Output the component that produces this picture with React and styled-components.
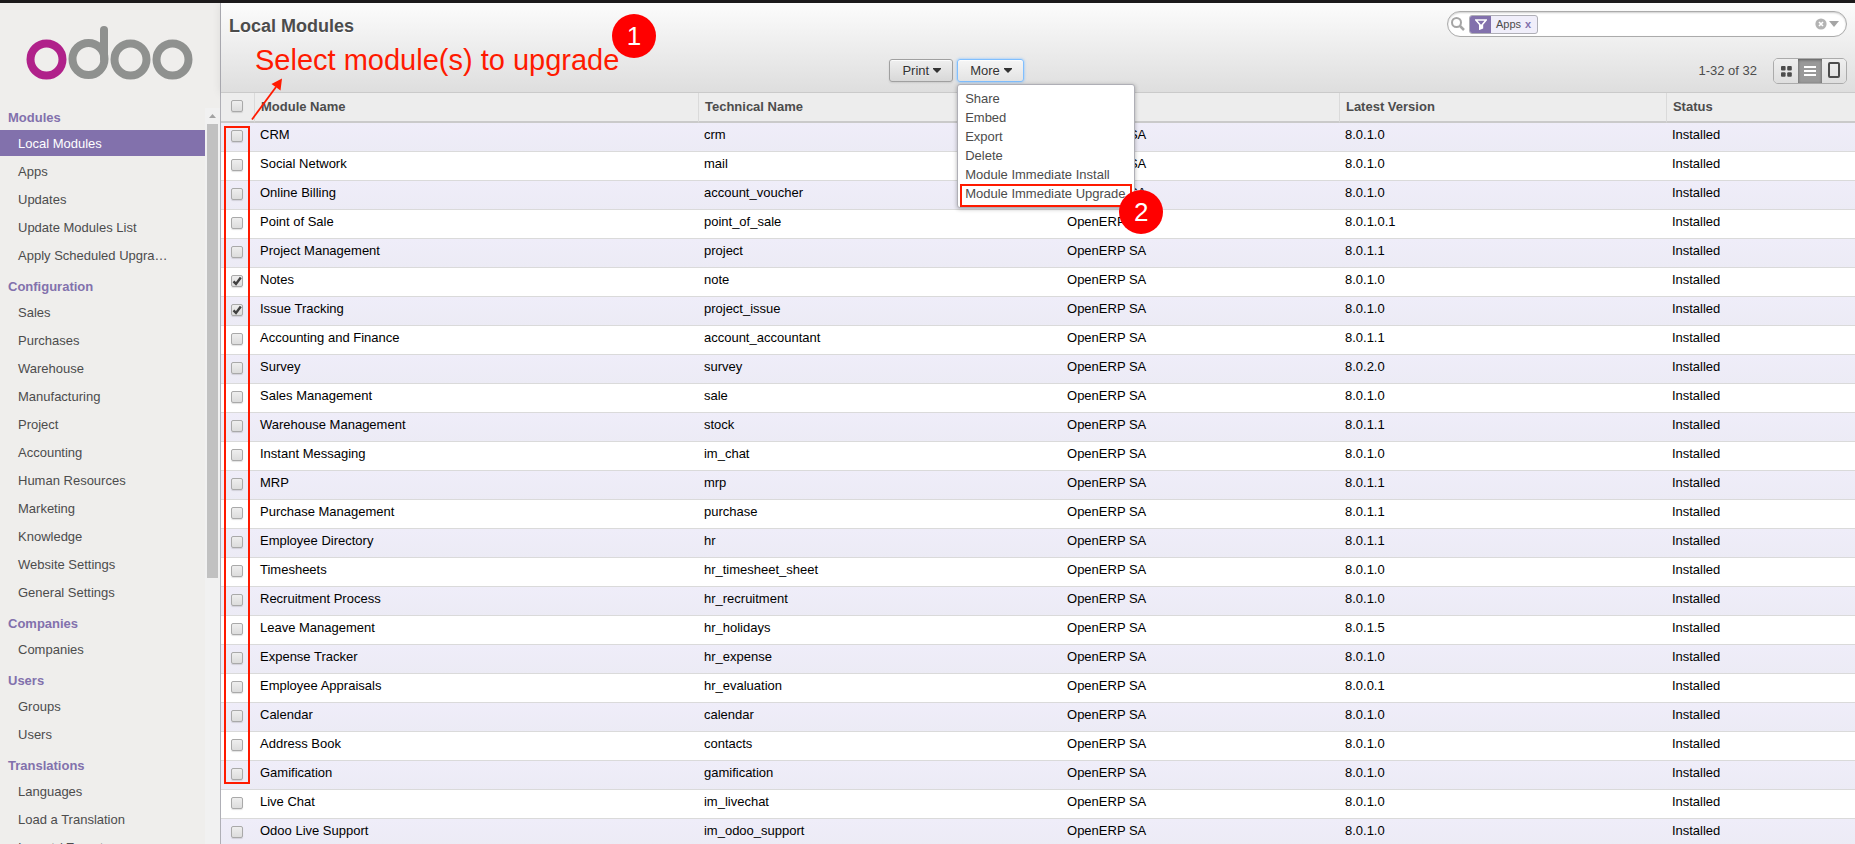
import React from "react";
import styled, { createGlobalStyle, css } from "styled-components";

const GlobalStyle = createGlobalStyle`
  * { box-sizing: border-box; }
  body {
    margin: 0;
    overflow: hidden;
    background: #fff;
    color: #4c4c4c;
    font-family: "Liberation Sans", Arial, sans-serif;
    font-size: 13px;
    line-height: 18px;
  }
  button, input { font: inherit; color: inherit; }
`;

const PURPLE = "#8271ac";
const RED = "#ff1a00";

const Shell = styled.div`
  display: flex;
  height: 100vh;
  overflow: hidden;
  border-top: 3px solid #1c1a1b;
`;

/* ---------- sidebar ---------- */

const Sidebar = styled.aside`
  display: flex;
  flex-direction: column;
  flex: none;
  width: 221px;
  background: #efeeec;
  border-right: 1px solid #afafb6;
`;

const LogoLink = styled.a`
  display: block;
  flex: none;
  height: 105px;
  padding: 23px 0 0 26px;
`;

const SidebarBody = styled.div`
  display: flex;
  flex: 1;
  min-height: 0;
`;

const Nav = styled.nav`
  flex: 1;
  min-width: 0;
  overflow: hidden;
`;

const Group = styled.section`
  & + & { margin-top: 9px; }
`;

const GroupTitle = styled.h2`
  margin: 0;
  padding: 1px 8px 3px;
  font-size: 13px;
  line-height: 18px;
  font-weight: bold;
  color: ${PURPLE};
`;

const GroupList = styled.ul`
  margin: 0;
  padding: 0;
  list-style: none;
`;

const NavLink = styled.a`
  display: block;
  margin-bottom: 2px;
  padding: 2px 36px 0 18px;
  line-height: 24px;
  color: #4c4c4c;
  text-decoration: none;
  white-space: nowrap;
  overflow: hidden;
  text-overflow: ellipsis;
  ${(p) => p.$active && css`
    background: ${PURPLE};
    color: #fff;
  `}
`;

const ScrollTrack = styled.div`
  flex: none;
  width: 15px;
  padding: 6px 2px 0;
  background: #f1f1f1;
  svg { display: block; margin: 0 auto 6px; }
`;

const ScrollThumb = styled.div`
  width: 11px;
  height: 454px;
  background: #c1c1c1;
`;

/* ---------- header ---------- */

const Main = styled.main`
  flex: 1;
  min-width: 0;
`;

const Header = styled.header`
  position: relative;
  display: grid;
  grid-template-columns: 20fr 29fr;
  grid-template-rows: 26px 26px;
  row-gap: 21px;
  height: 90px;
  padding: 8px 8px 0;
  background: linear-gradient(#fcfcfc, #dedede);
  border-bottom: 1px solid #cacaca;
  box-shadow: 0 0 9px rgba(0, 0, 0, 0.1);
`;

const Title = styled.h1`
  margin: 0;
  font-size: 18px;
  line-height: 30px;
  font-weight: bold;
  text-shadow: 0 1px 1px #fff;
`;

const SearchBox = styled.div`
  display: flex;
  align-items: center;
  justify-self: end;
  width: 400px;
  height: 26px;
  padding: 0 7px 0 3px;
  background: #fff;
  border: 1px solid #ababab;
  border-radius: 13px;
  box-shadow: inset 0 1px 2px rgba(0, 0, 0, 0.2);
`;

const IconButton = styled.button`
  display: flex;
  flex: none;
  padding: 0;
  border: 0;
  background: none;
`;

const Facet = styled.div`
  display: flex;
  align-items: center;
  height: 19px;
  margin-left: 4px;
  border: 1px solid #afafb6;
  border-radius: 3px;
  background: #f0eefa;
  overflow: hidden;
  font-size: 11px;
`;

const FacetIcon = styled.span`
  display: flex;
  align-items: center;
  justify-content: center;
  width: 21px;
  height: 17px;
  margin-right: 5px;
  background: ${PURPLE};
`;

const FacetRemove = styled.button`
  padding: 0 6px 0 4px;
  border: 0;
  background: none;
  color: ${PURPLE};
  font-weight: bold;
  line-height: 16px;
`;

const SearchInput = styled.input`
  flex: 1;
  min-width: 0;
  margin: 0 6px;
  border: 0;
  outline: 0;
  background: none;
`;

const Toolbar = styled.div`
  grid-column: 2;
  display: flex;
  justify-content: space-between;
  align-items: center;
`;

const Actions = styled.div`
  display: flex;
  align-self: flex-start;
  gap: 4px;
  padding-top: 1px;
`;

const Dropdown = styled.div`
  position: relative;
`;

const MenuButton = styled.button`
  display: flex;
  align-items: center;
  gap: 4px;
  height: 23px;
  padding: 0 11px 0 12px;
  border: 1px solid ${(p) => (p.$open ? "#80bfff" : "#a0a0a0")};
  border-radius: 3px;
  background: linear-gradient(#efefef, #d8d8d8);
  box-shadow: ${(p) => (p.$open ? "0 0 3px #80bfff, inset 0 1px rgba(255, 255, 255, 0.8)" : "0 1px 2px rgba(0, 0, 0, 0.1), inset 0 1px rgba(255, 255, 255, 0.8)")};
  ${(p) => p.$open && css`background: linear-gradient(#f6f6f6, #e3e3e3);`}
  color: #333;
  text-shadow: 0 1px 1px rgba(255, 255, 255, 0.5);
`;

const Menu = styled.ul`
  position: absolute;
  z-index: 2;
  top: 25px;
  left: 0;
  width: 178px;
  margin: 0;
  padding: 4px 0;
  list-style: none;
  background: #fff;
  border: 1px solid #afafb6;
  border-radius: 3px;
  box-shadow: 0 1px 4px rgba(0, 0, 0, 0.3);
`;

const MenuLink = styled.a`
  display: block;
  padding: 0 7px;
  line-height: 19px;
  color: #4c4c4c;
  text-decoration: none;
  white-space: nowrap;
`;

const PagerGroup = styled.div`
  display: flex;
  align-items: center;
  gap: 16px;
`;

const ViewSwitch = styled.div`
  display: flex;
  height: 26px;
  border: 1px solid #ababab;
  border-radius: 5px;
  overflow: hidden;
`;

const ViewButton = styled.button`
  display: flex;
  align-items: center;
  justify-content: center;
  width: 24px;
  padding: 0;
  border: 0;
  background: linear-gradient(#efefef, #dedede);
  ${(p) => p.$active && css`
    background: #999;
    box-shadow: inset 0 1px 3px rgba(0, 0, 0, 0.4);
  `}
`;

/* ---------- list ---------- */

const ListArea = styled.div`
  position: relative;
`;

const ModuleTable = styled.table`
  width: 100%;
  table-layout: fixed;
  border-collapse: separate;
  border-spacing: 0;
`;

const Col = styled.col`
  width: ${(p) => p.$w};
`;

const HeadCell = styled.th`
  height: 30px;
  padding: 0 6px;
  text-align: left;
  font-weight: bold;
  background: #ededed;
  border-left: 1px solid #dadada;
  border-bottom: 2px solid #cacaca;
`;

const HeadCheckCell = styled(HeadCell)`
  padding: 7px 0 0 10px;
  border-left: 0;
  vertical-align: top;
`;

const Row = styled.tr`
  color: #000;
  &:nth-child(odd) { background: linear-gradient(#efedf9, #ecebf5); }
`;

const Cell = styled.td`
  height: 29px;
  padding: 3px 6px 0;
  vertical-align: top;
  border-bottom: 1px solid #dadada;
`;

const CheckCell = styled(Cell)`
  padding: 7px 0 0 10px;
`;

const CheckLabel = styled.label`
  position: relative;
  display: block;
  width: 12px;
  height: 12px;
  svg {
    position: absolute;
    inset: 0;
    pointer-events: none;
    visibility: hidden;
  }
  input:checked + svg { visibility: visible; }
`;

const CheckInput = styled.input`
  appearance: none;
  display: block;
  width: 12px;
  height: 12px;
  margin: 0;
  border: 1px solid #a9a9a9;
  border-radius: 2px;
  background: linear-gradient(#eee, #dcdcdc);
  box-shadow: 0 1px 1px rgba(0, 0, 0, 0.12);
`;

/* ---------- guide marks ---------- */

const StepBadge = styled.span`
  position: absolute;
  z-index: 3;
  top: ${(p) => p.$top};
  left: ${(p) => p.$left};
  width: 44px;
  height: 44px;
  border-radius: 50%;
  background: #f00;
  color: #fff;
  font-size: 26px;
  line-height: 44px;
  text-align: center;
`;

const StepText = styled.p`
  position: absolute;
  top: 39px;
  left: 34px;
  margin: 0;
  font-size: 29px;
  line-height: 36px;
  color: ${RED};
  white-space: nowrap;
`;

const StepArrow = styled.svg`
  position: absolute;
  z-index: 1;
  top: 74px;
  left: 28px;
`;

const Outline = styled.div`
  position: absolute;
  border: 2px solid ${RED};
  pointer-events: none;
`;

const ColumnOutline = styled(Outline)`
  top: 33px;
  left: 3px;
  width: 26px;
  height: 658px;
`;

const ItemOutline = styled(Outline)`
  bottom: 0;
  left: 2px;
  right: 2px;
  height: 23px;
`;

/* ---------- icons ---------- */

const Logo = () => (
  <svg width="168" height="56" viewBox="0 0 168 56" fill="none" strokeWidth="8" role="img" aria-label="odoo">
    <circle cx="20.5" cy="33.5" r="16" stroke="#b0218a" />
    <g stroke="#8f918f">
      <circle cx="62.5" cy="33" r="16" />
      <path d="M78 33V4" strokeLinecap="round" />
      <circle cx="104.5" cy="33.5" r="16" />
      <circle cx="146.5" cy="33.5" r="16" />
    </g>
  </svg>
);

const Caret = () => (
  <svg width="8" height="5" viewBox="0 0 8 5" fill="#333"><path d="M0 0h8v1L4 5 0 1z" /></svg>
);

const Magnifier = () => (
  <svg width="14" height="14" viewBox="0 0 14 14" fill="none" stroke="#a5a5a5" strokeWidth="2">
    <circle cx="5.5" cy="5.5" r="4.5" />
    <path d="M9 9l4 4" strokeWidth="2.5" />
  </svg>
);

const Funnel = () => (
  <svg width="12" height="11" viewBox="0 0 12 11" fill="none" stroke="#fff" strokeWidth="1.6">
    <path d="M.8 1h10.4L7.4 5.6V9L4.800 10V5.6z" />
    <path d="M4.8 5.6h2.6V9L4.800 10z" fill="#fff" stroke="none" />
  </svg>
);

const Clear = () => (
  <svg width="12" height="12" viewBox="0 0 12 12">
    <circle cx="6" cy="6" r="5.6" fill="#b3b3b3" />
    <path d="M4 4l4 4M8 4l-4 4" stroke="#fff" strokeWidth="1.6" />
  </svg>
);

const Tick = () => (
  <svg width="12" height="12" viewBox="0 0 12 12" fill="none" stroke="#404040" strokeWidth="2.4">
    <path d="M2.5 6.4l2.5 2.5 4.8-6.4" />
  </svg>
);

const KanbanIcon = () => (
  <svg width="11" height="11" viewBox="0 0 11 11" fill="#4c4c4c">
    <rect width="4.6" height="4.6" rx="1" /><rect x="6.2" width="4.6" height="4.6" rx="1" />
    <rect y="6.2" width="4.6" height="4.6" rx="1" /><rect x="6.2" y="6.2" width="4.6" height="4.6" rx="1" />
  </svg>
);

const ListIcon = () => (
  <svg width="12" height="10" viewBox="0 0 12 10" fill="#fff">
    <path d="M0 0h12v2H0zM0 4h12v2H0zM0 8h12v2H0z" />
  </svg>
);

const FormIcon = () => (
  <svg width="12" height="18" viewBox="0 0 12 18" fill="none" stroke="#4c4c4c" strokeWidth="2">
    <rect x="1" y="1" width="10" height="14" rx="1" />
  </svg>
);

/* ---------- data ---------- */

const MENU = [
  ["Modules", ["Local Modules", "Apps", "Updates", "Update Modules List", "Apply Scheduled Upgrades"]],
  ["Configuration", ["Sales", "Purchases", "Warehouse", "Manufacturing", "Project", "Accounting", "Human Resources", "Marketing", "Knowledge", "Website Settings", "General Settings"]],
  ["Companies", ["Companies"]],
  ["Users", ["Groups", "Users"]],
  ["Translations", ["Languages", "Load a Translation", "Import / Export"]],
];

const MODULES = [
  ["CRM", "crm", "8.0.1.0"],
  ["Social Network", "mail", "8.0.1.0"],
  ["Online Billing", "account_voucher", "8.0.1.0"],
  ["Point of Sale", "point_of_sale", "8.0.1.0.1"],
  ["Project Management", "project", "8.0.1.1"],
  ["Notes", "note", "8.0.1.0", true],
  ["Issue Tracking", "project_issue", "8.0.1.0", true],
  ["Accounting and Finance", "account_accountant", "8.0.1.1"],
  ["Survey", "survey", "8.0.2.0"],
  ["Sales Management", "sale", "8.0.1.0"],
  ["Warehouse Management", "stock", "8.0.1.1"],
  ["Instant Messaging", "im_chat", "8.0.1.0"],
  ["MRP", "mrp", "8.0.1.1"],
  ["Purchase Management", "purchase", "8.0.1.1"],
  ["Employee Directory", "hr", "8.0.1.1"],
  ["Timesheets", "hr_timesheet_sheet", "8.0.1.0"],
  ["Recruitment Process", "hr_recruitment", "8.0.1.0"],
  ["Leave Management", "hr_holidays", "8.0.1.5"],
  ["Expense Tracker", "hr_expense", "8.0.1.0"],
  ["Employee Appraisals", "hr_evaluation", "8.0.0.1"],
  ["Calendar", "calendar", "8.0.1.0"],
  ["Address Book", "contacts", "8.0.1.0"],
  ["Gamification", "gamification", "8.0.1.0"],
  ["Live Chat", "im_livechat", "8.0.1.0"],
  ["Odoo Live Support", "im_odoo_support", "8.0.1.0"],
];

const ACTIONS = ["Share", "Embed", "Export", "Delete", "Module Immediate Install", "Module Immediate Upgrade"];

const Checkbox = ({ label, checked }) => (
  <CheckLabel>
    <CheckInput type="checkbox" aria-label={label} defaultChecked={checked} />
    <Tick />
  </CheckLabel>
);

export default function App() {
  return (
    <>
      <GlobalStyle />
      <Shell>
        <Sidebar>
          <LogoLink href="#home"><Logo /></LogoLink>
          <SidebarBody>
            <Nav>
              {MENU.map(([title, items]) => (
                <Group key={title}>
                  <GroupTitle>{title}</GroupTitle>
                  <GroupList>
                    {items.map((item) => (
                      <li key={item}>
                        <NavLink href="#menu" $active={item === "Local Modules"}>{item}</NavLink>
                      </li>
                    ))}
                  </GroupList>
                </Group>
              ))}
            </Nav>
            <ScrollTrack>
              <svg width="7" height="4" viewBox="0 0 7 4" fill="#a3a3a3"><path d="M0 4L3.5 0 7 4z" /></svg>
              <ScrollThumb />
            </ScrollTrack>
          </SidebarBody>
        </Sidebar>

        <Main>
          <Header>
            <Title>Local Modules</Title>
            <SearchBox>
              <IconButton aria-label="Search"><Magnifier /></IconButton>
              <Facet>
                <FacetIcon><Funnel /></FacetIcon>
                Apps
                <FacetRemove aria-label="Remove Apps filter">x</FacetRemove>
              </Facet>
              <SearchInput type="text" aria-label="Search modules" />
              <IconButton aria-label="Clear search"><Clear /></IconButton>
              <IconButton aria-label="Advanced search">
                <svg width="12" height="6" viewBox="0 0 12 6" fill="#a5a5a5"><path d="M2 0h10L7 6z" /></svg>
              </IconButton>
            </SearchBox>
            <Toolbar>
              <Actions>
                <MenuButton>Print <Caret /></MenuButton>
                <Dropdown>
                  <MenuButton $open aria-expanded="true">More <Caret /></MenuButton>
                  <Menu>
                    {ACTIONS.map((a) => (
                      <li key={a}><MenuLink href="#action">{a}</MenuLink></li>
                    ))}
                    <ItemOutline as="li" aria-hidden="true" />
                  </Menu>
                  <StepBadge $top="131px" $left="162px">2</StepBadge>
                </Dropdown>
              </Actions>
              <PagerGroup>
                <span>1-32 of 32</span>
                <ViewSwitch>
                  <ViewButton aria-label="Kanban"><KanbanIcon /></ViewButton>
                  <ViewButton aria-label="List" $active><ListIcon /></ViewButton>
                  <ViewButton aria-label="Form"><FormIcon /></ViewButton>
                </ViewSwitch>
              </PagerGroup>
            </Toolbar>
            <StepText>Select module(s) to upgrade</StepText>
            <StepBadge $top="11px" $left="391px">1</StepBadge>
            <StepArrow width="36" height="44" viewBox="0 0 36 44">
              <path d="M3 42.5L27 10" stroke={RED} strokeWidth="1.8" />
              <path d="M33 1.5L31.5 13.5 22.5 7z" fill={RED} />
            </StepArrow>
          </Header>

          <ListArea>
            <ModuleTable>
              <colgroup>
                <Col $w="33px" />
                <Col $w="27.17%" />
                <Col $w="22.22%" />
                <Col $w="17.01%" />
                <Col $w="20.01%" />
                <Col $w="auto" />
              </colgroup>
              <thead>
                <tr>
                  <HeadCheckCell><Checkbox label="Select all" /></HeadCheckCell>
                  {["Module Name", "Technical Name", "Author", "Latest Version", "Status"].map((h) => (
                    <HeadCell key={h} scope="col">{h}</HeadCell>
                  ))}
                </tr>
              </thead>
              <tbody>
                {MODULES.map(([name, tech, version, checked]) => (
                  <Row key={tech}>
                    <CheckCell><Checkbox label={`Select ${name}`} checked={checked} /></CheckCell>
                    <Cell>{name}</Cell>
                    <Cell>{tech}</Cell>
                    <Cell>OpenERP SA</Cell>
                    <Cell>{version}</Cell>
                    <Cell>Installed</Cell>
                  </Row>
                ))}
              </tbody>
            </ModuleTable>
            <ColumnOutline />
          </ListArea>
        </Main>
      </Shell>
    </>
  );
}
